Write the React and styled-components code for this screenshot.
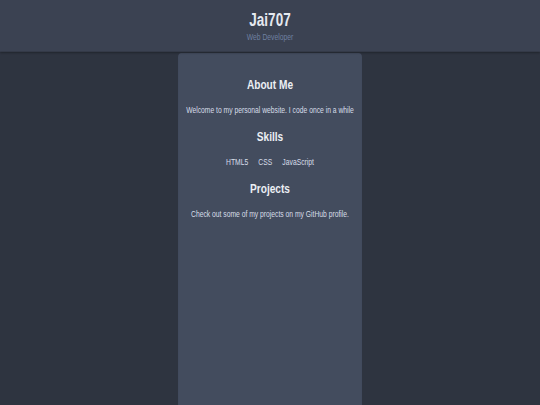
import React from 'react'
import styled, {createGlobalStyle} from 'styled-components'

// the shot is a 1280x720 page squeezed into 540x405, so the page is laid
// out at that size and scaled down once
const Global = createGlobalStyle`
  html, body {
    margin: 0;
    padding: 0;
    background: #2e3440;
    overflow: hidden;
  }
  body {
    font-family: 'Liberation Sans', Arial, sans-serif;
    color: #d8dee9;
  }
`

const Viewport = styled.div`
  width: 540px;
  height: 405px;
  overflow: hidden;
`

const Page = styled.div`
  width: 1280px;
  height: 720px;
  display: flex;
  flex-direction: column;
  transform: scale(0.421875, 0.5625);
  transform-origin: 0 0;
`

const Header = styled.header`
  background: #3b4252;
  height: 92px;
  flex-shrink: 0;
  display: flex;
  flex-direction: column;
  align-items: center;
  justify-content: center;
  box-shadow: 0 2px 4px rgba(0, 0, 0, 0.3);
  position: relative;
  z-index: 1;
`

const Title = styled.h1`
  margin: 0;
  font-size: 32px;
  line-height: 37px;
  font-weight: bold;
  color: #e5e9f0;
`

const Subtitle = styled.div`
  margin-top: 3px;
  font-size: 16px;
  line-height: 18px;
  color: #6f80a0;
`

const Card = styled.main`
  width: 436px;
  margin: 2px auto 0;
  flex: 1;
  box-sizing: border-box;
  padding-top: 43px;
  background: #434c5e;
  border-radius: 8px 8px 0 0;
  text-align: center;
  display: flex;
  flex-direction: column;
  gap: 24px;
`

const Section = styled.section``

const Heading = styled.h2`
  margin: 0 0 22px;
  font-size: 24px;
  line-height: 28px;
  font-weight: bold;
  color: #eceff4;
`

const Text = styled.p`
  margin: 0;
  font-size: 16px;
  line-height: 18px;
`

const SkillList = styled.ul`
  list-style: none;
  margin: 0;
  padding: 0;
  display: flex;
  justify-content: center;
  gap: 24px;
  font-size: 16px;
  line-height: 18px;
`

export default function App() {
  return (
    <Viewport>
      <Global />
      <Page>
        <Header>
          <Title>Jai707</Title>
          <Subtitle>Web Developer</Subtitle>
        </Header>
        <Card>
          <Section>
            <Heading>About Me</Heading>
            <Text>Welcome to my personal website. I code once in a while</Text>
          </Section>
          <Section>
            <Heading>Skills</Heading>
            <SkillList>
              <li>HTML5</li>
              <li>CSS</li>
              <li>JavaScript</li>
            </SkillList>
          </Section>
          <Section>
            <Heading>Projects</Heading>
            <Text>Check out some of my projects on my GitHub profile.</Text>
          </Section>
        </Card>
      </Page>
    </Viewport>
  )
}
